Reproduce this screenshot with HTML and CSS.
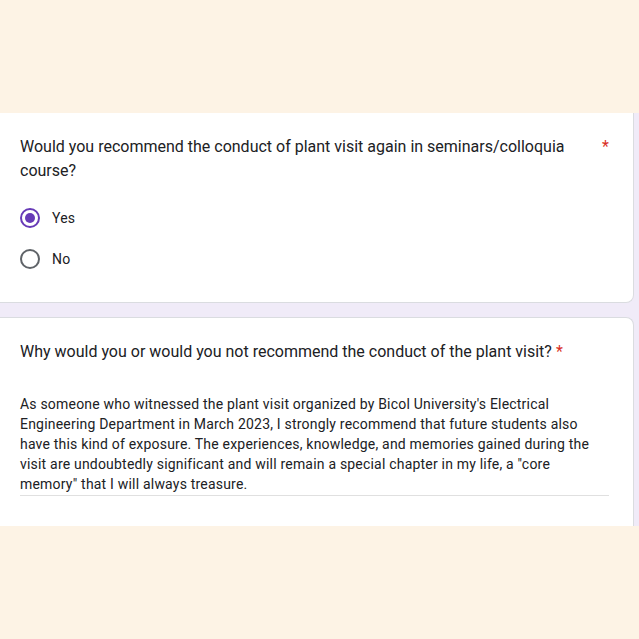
FILE: index.html
```html
<!DOCTYPE html>
<html>
<head>
<meta charset="utf-8">
<link rel="stylesheet" href="styles.css">
</head>
<body>
<div class="top-band"></div>
<div class="forms">
  <div class="card card-first">
    <div class="q-head">
      <div class="q-title">Would you recommend the conduct of plant visit again in seminars/colloquia course?</div>
      <span class="req req-far">*</span>
    </div>
    <div class="options">
      <div class="option">
        <span class="radio radio-on"><span class="dot"></span></span>
        <span class="opt-label">Yes</span>
      </div>
      <div class="option">
        <span class="radio"></span>
        <span class="opt-label">No</span>
      </div>
    </div>
  </div>
  <div class="card card-last">
    <div class="q-title">Why would you or would you not recommend the conduct of the plant visit? <span class="req">*</span></div>
    <div class="answer">As someone who witnessed the plant visit organized by Bicol University's Electrical<br>Engineering Department in March 2023, I strongly recommend that future students also<br>have this kind of exposure. The experiences, knowledge, and memories gained during the<br>visit are undoubtedly significant and will remain a special chapter in my life, a "core<br>memory" that I will always treasure.</div>
  </div>
</div>
<div class="bottom-band"></div>
</body>
</html>
```

FILE: styles.css
```css
html, body {
  margin: 0;
  padding: 0;
  background: #fdf3e5;
  font-family: Roboto, "Noto Sans", Arial, sans-serif;
  color: #202124;
}
.top-band {
  height: 113px;
}
.forms {
  background: #f0ebf8;
  padding-right: 5px;
  display: flex;
  flex-direction: column;
  gap: 14px;
}
.card {
  background: #fff;
  border: 1px solid #dadce0;
  border-left: none;
  border-radius: 0 8px 8px 0;
  box-sizing: border-box;
}
.card-first {
  border-top: none;
  border-top-right-radius: 0;
  height: 190px;
  padding: 22px 0 0 20px;
}
.card-last {
  border-bottom: none;
  border-bottom-right-radius: 0;
  height: 209px;
  padding: 22px 24px 0 20px;
}
.q-head {
  display: flex;
  align-items: flex-start;
}
.q-title {
  font-size: 16px;
  line-height: 24px;
}
.q-head .q-title {
  width: 570px;
}
.req {
  color: #d93025;
}
.req-far {
  margin-left: 12px;
  font-size: 16px;
  line-height: 24px;
}
.options {
  margin-top: 25px;
  display: flex;
  flex-direction: column;
  gap: 21px;
}
.option {
  display: flex;
  align-items: center;
  gap: 12px;
  height: 20px;
}
.radio {
  width: 20px;
  height: 20px;
  box-sizing: border-box;
  border: 2px solid #5f6368;
  border-radius: 50%;
  display: flex;
  align-items: center;
  justify-content: center;
}
.radio-on {
  border-color: #673ab7;
}
.dot {
  width: 10px;
  height: 10px;
  border-radius: 50%;
  background: #673ab7;
}
.opt-label {
  font-size: 14px;
  letter-spacing: 0.2px;
}
.answer {
  margin-top: 30px;
  font-size: 14px;
  line-height: 20px;
  letter-spacing: 0.2px;
  padding-bottom: 1px;
  border-bottom: 1px solid #e0e0e0;
  white-space: nowrap;
}
.bottom-band {
  height: 113px;
}
```
